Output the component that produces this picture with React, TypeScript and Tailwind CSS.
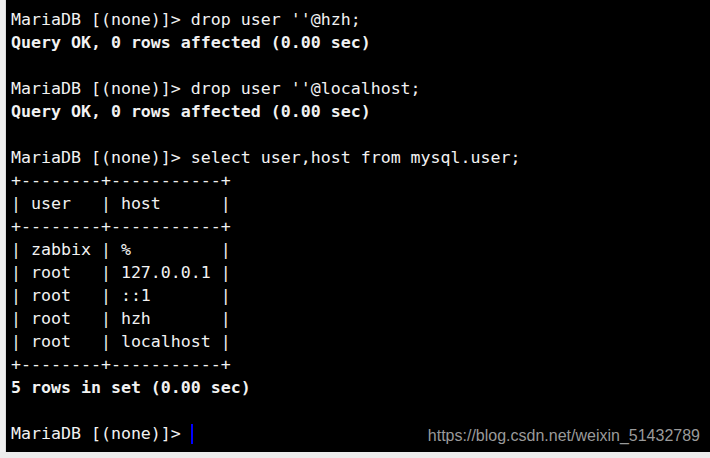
const lines: { text: string; bold?: boolean }[] = [
  { text: "MariaDB [(none)]> drop user ''@hzh;" },
  { text: "Query OK, 0 rows affected (0.00 sec)", bold: true },
  { text: "" },
  { text: "MariaDB [(none)]> drop user ''@localhost;" },
  { text: "Query OK, 0 rows affected (0.00 sec)", bold: true },
  { text: "" },
  { text: "MariaDB [(none)]> select user,host from mysql.user;" },
  { text: "+--------+-----------+" },
  { text: "| user   | host      |" },
  { text: "+--------+-----------+" },
  { text: "| zabbix | %         |" },
  { text: "| root   | 127.0.0.1 |" },
  { text: "| root   | ::1       |" },
  { text: "| root   | hzh       |" },
  { text: "| root   | localhost |" },
  { text: "+--------+-----------+" },
  { text: "5 rows in set (0.00 sec)", bold: true },
  { text: "" },
];

const App = () => {
  return (
    <div className="w-[710px] h-[458px] bg-[#f0f0f0] flex flex-col overflow-hidden">
      <div className="flex flex-1 min-h-0">
        <div className="w-[6px] border-r border-[#dcdcdc] bg-[#f0f0f0]" />
        <div className="relative flex-1 bg-black pt-[8px] pl-[5px] font-['DejaVu_Sans_Mono',monospace] text-[16.6px] leading-[23px] text-[#f2f2f2]">
          {lines.map((l, i) => (
            <div key={i} className={`h-[23px] whitespace-pre ${l.bold ? "font-bold" : ""}`}>
              {l.text}
            </div>
          ))}
          <div className="h-[23px] whitespace-pre flex items-center">
            <span>MariaDB [(none)]&gt; </span>
            <span className="w-[2px] h-[20px] bg-[#0000ff]" />
          </div>
          <span className="absolute right-[10px] bottom-[7px] font-['Liberation_Sans',Arial,sans-serif] text-[16px] leading-[19px] text-[#9a9a9a]">
            https://blog.csdn.net/weixin_51432789
          </span>
        </div>
      </div>
      <div className="h-[6px] bg-[#ececec]" />
    </div>
  );
};

export default App;
